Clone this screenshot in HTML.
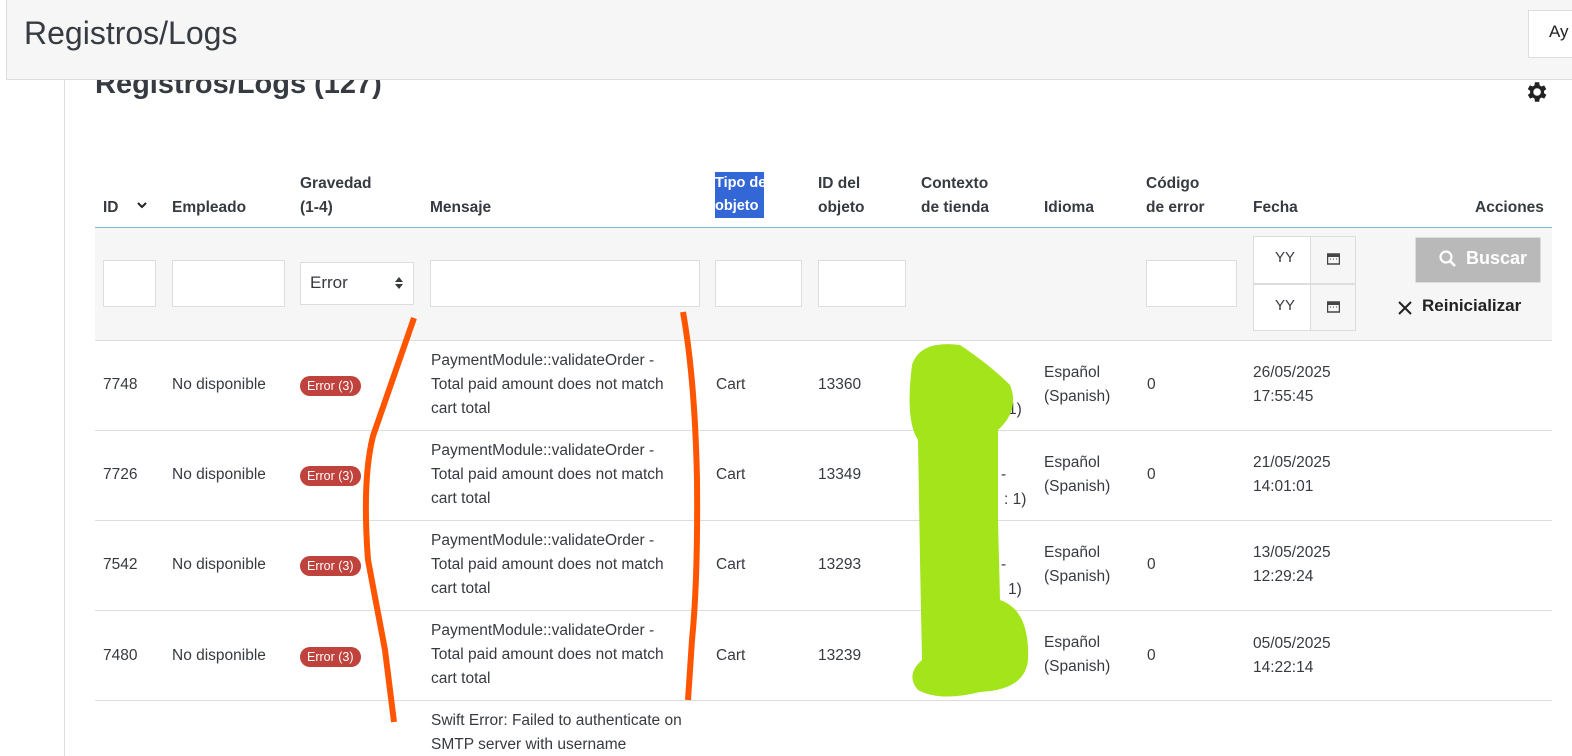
<!DOCTYPE html>
<html><head><meta charset="utf-8"><style>
*{margin:0;padding:0;box-sizing:border-box}
html,body{width:1572px;height:756px;overflow:hidden}
body{background:#fff;font-family:"Liberation Sans",sans-serif;color:#363a41;position:relative;font-size:15.5px}
.a{position:absolute;white-space:nowrap}
.hd{position:absolute;left:6px;top:0;width:1566px;height:80px;background:#f6f6f6;border-bottom:1px solid #ddd;border-left:1px solid #ddd;z-index:2}
.th{position:absolute;font-weight:bold;font-size:15.5px;line-height:24px;color:#363a41;white-space:nowrap}
.inp{position:absolute;background:#fff;border:1px solid #ddd}
.row{position:absolute;left:95px;width:1457px;height:90px;border-top:1px solid #ddd}
.c{position:absolute;line-height:24px;font-size:15.5px;white-space:nowrap}
.badge{position:absolute;left:300px;background:#c0423c;color:#fff;font-size:12.5px;border-radius:10px;padding:2px 7px;line-height:16px}
</style></head><body>
<div class="hd"></div>
<div class="a" style="left:24px;top:15px;font-size:32px;color:#363a41;z-index:3">Registros/Logs</div>
<div class="a" style="left:1528px;top:10px;width:50px;height:48px;background:#fff;border:1px solid #ddd;z-index:3"></div>
<div class="a" style="left:1549px;top:22px;font-size:17px;color:#222;z-index:3">Ay</div>
<div class="a" style="left:64px;top:80px;width:1px;height:676px;background:#ddd"></div>
<div class="a" style="left:95px;top:68px;font-size:29px;font-weight:bold;color:#363a41">Registros/Logs (127)</div>
<svg class="a" style="left:1523px;top:79px" width="26" height="26" viewBox="0 0 24 24"><path fill="#222" d="M19.4 13a7.5 7.5 0 000-2l2.1-1.6-2-3.5-2.5 1a7 7 0 00-1.7-1L15 3h-4l-.4 2.9a7 7 0 00-1.7 1l-2.5-1-2 3.5L6.6 11a7.5 7.5 0 000 2l-2.1 1.6 2 3.5 2.5-1a7 7 0 001.7 1L11 21h4l.4-2.9a7 7 0 001.7-1l2.5 1 2-3.5zM13 15.5a3.5 3.5 0 110-7 3.5 3.5 0 010 7z"/></svg>
<div class="th" style="left:103px;top:196px">ID</div>
<svg class="a" style="left:136px;top:201px" width="12" height="10"><path d="M2 2l4 4 4-4" stroke="#222" stroke-width="2" fill="none"/></svg>
<div class="th" style="left:172px;top:196px">Empleado</div>
<div class="th" style="left:300px;top:172px">Gravedad<br>(1-4)</div>
<div class="th" style="left:430px;top:196px">Mensaje</div>
<div class="th" style="left:715px;top:172px;background:#3367d6;color:#fff;line-height:23px;width:49px;overflow:hidden;font-size:14.5px">Tipo de<br>objeto</div>
<div class="th" style="left:818px;top:172px">ID del<br>objeto</div>
<div class="th" style="left:921px;top:172px">Contexto<br>de tienda</div>
<div class="th" style="left:1044px;top:196px">Idioma</div>
<div class="th" style="left:1146px;top:172px">Código<br>de error</div>
<div class="th" style="left:1253px;top:196px">Fecha</div>
<div class="th" style="left:1475px;top:196px">Acciones</div>
<div class="a" style="left:95px;top:227px;width:1457px;height:113px;background:#f6f6f6;border-top:1px solid #7cb8d0"></div>
<div class="inp" style="left:103px;top:260px;width:53px;height:47px"></div>
<div class="inp" style="left:172px;top:260px;width:113px;height:47px"></div>
<div class="inp" style="left:300px;top:262px;width:114px;height:43px"></div>
<div class="a" style="left:310px;top:273px;font-size:17px">Error</div>
<svg class="a" style="left:394px;top:275px" width="10" height="16"><path d="M1 7l4-5 4 5zM1 9l4 5 4-5z" fill="#363a41"/></svg>
<div class="inp" style="left:430px;top:260px;width:270px;height:47px"></div>
<div class="inp" style="left:715px;top:260px;width:87px;height:47px"></div>
<div class="inp" style="left:818px;top:260px;width:88px;height:47px"></div>
<div class="inp" style="left:1146px;top:260px;width:91px;height:47px"></div>
<div class="inp" style="left:1253px;top:236px;width:58px;height:48px"></div>
<div class="inp" style="left:1310px;top:236px;width:46px;height:48px;background:#f6f6f6"></div>
<div class="inp" style="left:1253px;top:284px;width:58px;height:47px"></div>
<div class="inp" style="left:1310px;top:284px;width:46px;height:47px;background:#f6f6f6"></div>
<div class="a" style="left:1275px;top:249px;font-size:15px">YY</div>
<div class="a" style="left:1275px;top:297px;font-size:15px">YY</div>
<svg class="a" style="left:1327px;top:252px" width="13" height="13"><rect x="0.5" y="2" width="12" height="10" fill="none" stroke="#444" stroke-width="1.5"/><rect x="0.5" y="2" width="12" height="3" fill="#444"/><path d="M3 7h1M6 7h1M9 7h1" stroke="#444"/></svg>
<svg class="a" style="left:1327px;top:300px" width="13" height="13"><rect x="0.5" y="2" width="12" height="10" fill="none" stroke="#444" stroke-width="1.5"/><rect x="0.5" y="2" width="12" height="3" fill="#444"/><path d="M3 7h1M6 7h1M9 7h1" stroke="#444"/></svg>
<div class="a" style="left:1415px;top:237px;width:126px;height:46px;background:#b9b9b9;border:1px solid #ddd"></div>
<svg class="a" style="left:1438px;top:249px" width="20" height="20"><circle cx="8" cy="8" r="5.5" stroke="#fff" stroke-width="2.2" fill="none"/><path d="M12 12l5 5" stroke="#fff" stroke-width="2.5"/></svg>
<div class="a" style="left:1466px;top:248px;color:#fff;font-weight:bold;font-size:18px">Buscar</div>
<svg class="a" style="left:1397px;top:300px" width="16" height="16"><path d="M2 2l12 12M14 2L2 14" stroke="#222" stroke-width="2"/></svg>
<div class="a" style="left:1422px;top:296px;font-weight:bold;font-size:17px;color:#222">Reinicializar</div>

<div class="row" style="top:340px"></div><div class="row" style="top:430px"></div><div class="row" style="top:520px"></div><div class="row" style="top:610px"></div><div class="row" style="top:700px"></div>

<div class="c" style="left:103px;top:373px">7748</div><div class="c" style="left:172px;top:373px">No disponible</div><div class="badge" style="top:376px">Error (3)</div>
<div class="c" style="left:431px;top:349px">PaymentModule::validateOrder -<br>Total paid amount does not match<br>cart total</div>
<div class="c" style="left:716px;top:373px">Cart</div><div class="c" style="left:818px;top:373px">13360</div>
<div class="c" style="left:1044px;top:361px">Español<br>(Spanish)</div><div class="c" style="left:1147px;top:373px">0</div><div class="c" style="left:1253px;top:361px">26/05/2025<br>17:55:45</div>

<div class="c" style="left:103px;top:463px">7726</div><div class="c" style="left:172px;top:463px">No disponible</div><div class="badge" style="top:466px">Error (3)</div>
<div class="c" style="left:431px;top:439px">PaymentModule::validateOrder -<br>Total paid amount does not match<br>cart total</div>
<div class="c" style="left:716px;top:463px">Cart</div><div class="c" style="left:818px;top:463px">13349</div>
<div class="c" style="left:1044px;top:451px">Español<br>(Spanish)</div><div class="c" style="left:1147px;top:463px">0</div><div class="c" style="left:1253px;top:451px">21/05/2025<br>14:01:01</div>

<div class="c" style="left:103px;top:553px">7542</div><div class="c" style="left:172px;top:553px">No disponible</div><div class="badge" style="top:556px">Error (3)</div>
<div class="c" style="left:431px;top:529px">PaymentModule::validateOrder -<br>Total paid amount does not match<br>cart total</div>
<div class="c" style="left:716px;top:553px">Cart</div><div class="c" style="left:818px;top:553px">13293</div>
<div class="c" style="left:1044px;top:541px">Español<br>(Spanish)</div><div class="c" style="left:1147px;top:553px">0</div><div class="c" style="left:1253px;top:541px">13/05/2025<br>12:29:24</div>

<div class="c" style="left:103px;top:644px">7480</div><div class="c" style="left:172px;top:644px">No disponible</div><div class="badge" style="top:647px">Error (3)</div>
<div class="c" style="left:431px;top:619px">PaymentModule::validateOrder -<br>Total paid amount does not match<br>cart total</div>
<div class="c" style="left:716px;top:644px">Cart</div><div class="c" style="left:818px;top:644px">13239</div>
<div class="c" style="left:1044px;top:631px">Español<br>(Spanish)</div><div class="c" style="left:1147px;top:644px">0</div><div class="c" style="left:1253px;top:632px">05/05/2025<br>14:22:14</div>

<div class="c" style="left:431px;top:709px">Swift Error: Failed to authenticate on<br>SMTP server with username</div>
<div class="c" style="left:1008px;top:398px">1)</div><div class="c" style="left:1001px;top:463px">-</div><div class="c" style="left:1004px;top:488px">: 1)</div><div class="c" style="left:1001px;top:553px">-</div><div class="c" style="left:1008px;top:578px">1)</div>

<svg class="a" style="left:0;top:0" width="1572" height="756">
<path d="M414 318 L373 436 Q362 480 368 560 L385 650 L394 722" stroke="#ff5500" stroke-width="6" fill="none"/>
<path d="M683 312 Q695 380 697 480 Q698 580 692 640 L688 700" stroke="#ff5500" stroke-width="6" fill="none"/>
<path fill="#a3e41b" d="M912 365 Q920 340 960 345 Q990 365 1010 385 Q1020 410 998 430 L998 520 L1000 600 Q1030 610 1028 660 Q1025 690 980 692 Q940 702 918 690 Q905 675 922 660 L920 560 L918 440 Q905 420 912 365Z"/>
</svg>
</body></html>
